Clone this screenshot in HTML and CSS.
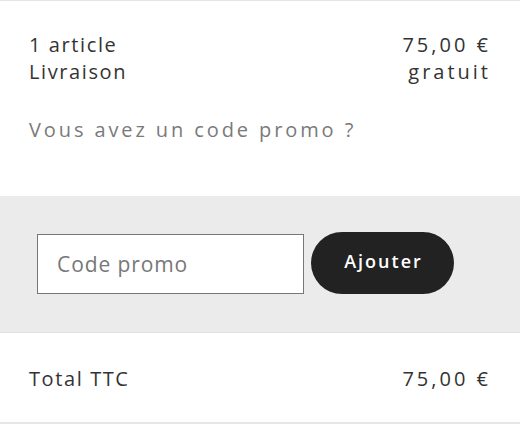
FILE: index.html
```html
<!DOCTYPE html>
<html lang="fr">
<head>
<meta charset="utf-8">
<link rel="stylesheet" href="styles.css">
</head>
<body>
<div class="cart">
  <div class="lines">
    <div class="row"><span>1 article</span><span class="val">75,00 €</span></div>
    <div class="row"><span>Livraison</span><span class="val">gratuit</span></div>
    <p class="promo-toggle">Vous avez un code promo ?</p>
  </div>
  <div class="promo">
    <input class="promo-input" type="text" placeholder="Code promo">
    <button class="promo-btn" type="button">Ajouter</button>
  </div>
  <div class="total">
    <div class="row"><span>Total TTC</span><span class="val">75,00 €</span></div>
  </div>
</div>
</body>
</html>
```
FILE: styles.css
```css
html, body {
  margin: 0;
  padding: 0;
  background: #fff;
}
body {
  font-family: "Open Sans", "Liberation Sans", sans-serif;
  color: #333;
}
.cart {
  width: 520px;
  border-top: 1px solid #e6e6e6;
}
.lines {
  padding: 30px 29px 53px 29px;
}
.row {
  display: flex;
  justify-content: space-between;
  font-size: 20px;
  line-height: 27px;
  letter-spacing: 1.6px;
}
.val {
  letter-spacing: 3px;
  margin-right: 0;
}
.promo-toggle {
  margin: 31px 0 0 0;
  font-size: 20px;
  line-height: 27px;
  letter-spacing: 2.9px;
  color: #7a7a7a;
}
.promo {
  background: #ebebeb;
  border-bottom: 1px solid #e0e0e0;
  height: 100px;
  box-sizing: content-box;
  padding: 36px 37px 0 37px;
  display: flex;
  align-items: flex-start;
  gap: 7px;
}
.promo-input {
  box-sizing: border-box;
  width: 267px;
  height: 60px;
  margin: 2px 0 0 0;
  border: 1px solid #777;
  background: #fff;
  padding: 0 19px;
  font-family: "Open Sans", "Liberation Sans", sans-serif;
  font-size: 21px;
  letter-spacing: 0.9px;
  color: #333;
  outline: none;
}
.promo-input::placeholder {
  color: #777;
}
.promo-btn {
  box-sizing: border-box;
  width: 143px;
  height: 62px;
  border: none;
  border-radius: 31px;
  background: #222;
  color: #fff;
  font-family: "Open Sans", "Liberation Sans", sans-serif;
  font-size: 18px;
  font-weight: 600;
  letter-spacing: 2px;
  padding: 0 0 5px 2px;
}
.total {
  padding: 32px 29px 30px 29px;
  border-bottom: 2px solid #e6e6e6;
}
```
